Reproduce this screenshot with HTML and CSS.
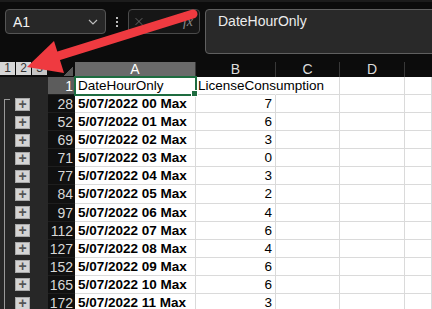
FILE: index.html
```html
<!DOCTYPE html>
<html>
<head>
    <title>DateHourOnly</title>
    <link rel="stylesheet" href="styles.css">
</head>
<body>
    <div class="app">
        <div class="toolbar">
            <div class="namebox">
                <span>A1</span>
                <svg class="chevron" width="10" height="6" viewBox="0 0 10 6"><path d="M1 1 L5 5 L9 1" fill="none" stroke="#bdbdbd" stroke-width="1.2"/></svg>
            </div>
            <div class="kebab"><i></i><i></i><i></i></div>
            <div class="fxbox">
                <svg width="13" height="13" viewBox="0 0 13 13"><path d="M1 1 L12 12 M12 1 L1 12" stroke="#7a7a7a" stroke-width="1.3"/></svg>
                <svg width="13" height="13" viewBox="0 0 13 13"><path d="M1 7 L5 11 L12 2" fill="none" stroke="#7a7a7a" stroke-width="1.3"/></svg>
                <span class="fx">fx</span>
            </div>
            <div class="formula">DateHourOnly</div>
        </div>

        <div class="sheet" id="sheet">
            <div class="levels"><span>1</span><span>2</span><span class="pressed">3</span></div>
            <div class="corner"><i></i></div>
            <div class="colhead active">A</div>
            <div class="colhead">B</div>
            <div class="colhead">C</div>
            <div class="colhead">D</div>
            <div class="colhead last"></div>

            <div class="outline"></div>
            <div class="rowhead active">1</div>
            <div class="cell selected">DateHourOnly</div>
            <div class="cell spill">LicenseConsumption</div>
            <div class="cell"></div>
            <div class="cell"></div>
            <div class="cell"></div>
        </div>

        <svg class="arrow" width="432" height="309" viewBox="0 0 432 309">
            <line x1="193" y1="14" x2="58" y2="56" stroke="#ef3a40" stroke-width="9" stroke-linecap="round"/>
            <polygon points="27,67 54,41 64,73" fill="#ef3a40"/>
        </svg>
    </div>

    <script>
        // baris data: nomor baris, jam, nilai
        const rows = [
            [28, '00', 7], [52, '01', 6], [69, '02', 3], [71, '03', 0],
            [77, '04', 3], [84, '05', 2], [97, '06', 4], [112, '07', 6],
            [127, '08', 4], [152, '09', 6], [165, '10', 6], [172, '11', 3]
        ];

        const sheet = document.getElementById('sheet');
        rows.forEach(([num, hour, value], i) => {
            const html = `
                <div class="outline${i === 0 ? ' first' : ''}"><span class="plus">+</span></div>
                <div class="rowhead">${num}</div>
                <div class="cell bold">5/07/2022 ${hour} Max</div>
                <div class="cell num">${value}</div>
                <div class="cell"></div>
                <div class="cell"></div>
                <div class="cell"></div>`;
            sheet.insertAdjacentHTML('beforeend', html);
        });
    </script>
</body>
</html>
```
FILE: styles.css
```css
body {
    margin: 0;
    background: #0c0c0c;
    font-family: "Liberation Sans", Arial, sans-serif;
    overflow: hidden;
}
.app {
    position: relative;
    width: 432px;
    height: 309px;
    overflow: hidden;
}
.toolbar {
    display: flex;
    align-items: flex-start;
    height: 62px;
    padding: 7px 0 0 5px;
    box-sizing: border-box;
    border-top: 2px solid #1c1c1c;
    background: #0c0c0c;
}
.namebox {
    display: flex;
    align-items: center;
    justify-content: space-between;
    width: 101px;
    height: 25px;
    box-sizing: border-box;
    padding: 0 7px 0 7px;
    border: 1px solid #555;
    border-radius: 4px;
    background: #272727;
    color: #f2f2f2;
    font-size: 14px;
}
.kebab {
    display: flex;
    flex-direction: column;
    align-items: center;
    gap: 2px;
    width: 22px;
    padding-top: 8px;
}
.kebab i {
    width: 2px;
    height: 2px;
    background: #bbb;
}
.fxbox {
    display: flex;
    align-items: center;
    gap: 16px;
    width: 72px;
    height: 25px;
    box-sizing: border-box;
    padding: 0 6px;
    border: 1px solid #4a4a4a;
    border-radius: 4px;
    background: #161616;
}
.fx {
    color: #8a8a8a;
    font-family: "Liberation Serif", serif;
    font-style: italic;
    font-size: 14px;
}
.formula {
    flex: 1;
    height: 45px;
    margin: 0 -10px 0 5px;
    padding: 2px 12px;
    box-sizing: border-box;
    border: 1px solid #606060;
    border-radius: 4px;
    background: #292929;
    color: #ececec;
    font-size: 14px;
    line-height: 18px;
}

.sheet {
    display: grid;
    grid-template-columns: 48px 27px 121px 80px 64px 65px 1fr;
    grid-template-rows: 15px 18px;
    grid-auto-rows: 18.1px;
    font-size: 13.5px;
}
.levels {
    display: flex;
    gap: 1px;
    background: #0c0c0c;
}
.levels span {
    width: 15px;
    height: 13px;
    background: #d6d6d6;
    color: #333;
    font-size: 12px;
    line-height: 13px;
    text-align: center;
}
.levels .pressed {
    background: #c6c6c6;
}
.corner {
    display: flex;
    justify-content: flex-end;
    align-items: flex-end;
    padding: 0 2px 1px 0;
    background: #0c0c0c;
}
.corner i {
    width: 10px;
    height: 10px;
    background: linear-gradient(to bottom right, transparent 50%, #595959 50%);
}
.colhead {
    background: #0c0c0c;
    border-right: 1px solid #383838;
    color: #dcdcdc;
    text-align: center;
    font-size: 14px;
    line-height: 15px;
}
.colhead.active {
    background: #6a6a6a;
    color: #fff;
}
.colhead.last {
    border-right: none;
}

.outline {
    background: #272727;
    display: flex;
    align-items: center;
    padding-left: 15px;
}
.outline.first,
.outline.first ~ .outline {
    background: linear-gradient(#9a9a9a, #9a9a9a) 4px 0 / 1px 100% no-repeat, #272727;
}
.outline.first {
    background:
        linear-gradient(#9a9a9a, #9a9a9a) 4px 4px / 1px 100% no-repeat,
        linear-gradient(#9a9a9a, #9a9a9a) 4px 4px / 6px 1px no-repeat,
        #272727;
}
.plus {
    width: 15px;
    height: 13px;
    box-sizing: border-box;
    border: 1px solid #a8a8a8;
    background: #d4d4d4;
    color: #555;
    font-weight: bold;
    font-size: 14px;
    line-height: 11px;
    text-align: center;
}
.rowhead {
    background: #101010;
    border-bottom: 1px solid #1e1e1e;
    color: #d8d8d8;
    text-align: right;
    padding-right: 2px;
    font-size: 14px;
    line-height: 18px;
}
.rowhead.active {
    background: #5c5c5c;
    color: #fff;
}
.cell {
    background: #fff;
    border-right: 1px solid #dadada;
    border-bottom: 1px solid #dadada;
    color: #000;
    padding: 0 3px;
    line-height: 17px;
    white-space: nowrap;
}
.cell.bold {
    font-weight: bold;
}
.cell.num {
    text-align: right;
}
.cell.spill {
    position: relative;
    z-index: 1;
    overflow: visible;
    padding-left: 2px;
    border-right-color: #fff;
}
.cell.selected {
    position: relative;
    overflow: visible;
    z-index: 2;
    outline: 2px solid #1e6c40;
    outline-offset: -1px;
}
.cell.selected::after {
    content: "";
    position: absolute;
    right: -3px;
    bottom: -3px;
    width: 5px;
    height: 5px;
    background: #1e6c40;
    border: 1px solid #fff;
}
.arrow {
    position: absolute;
    left: 0;
    top: 0;
    pointer-events: none;
    z-index: 5;
}
```
